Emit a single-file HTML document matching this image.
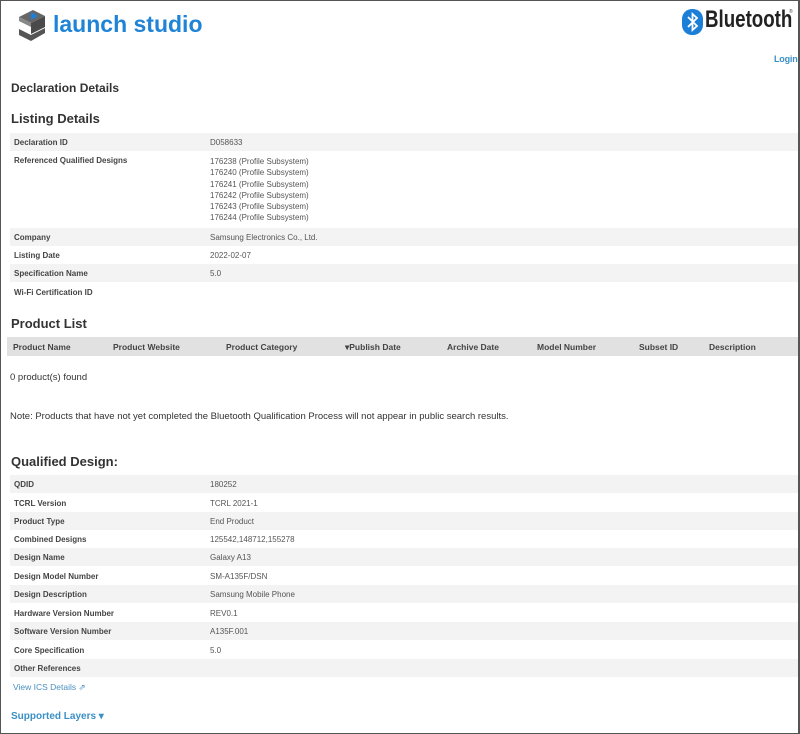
<!DOCTYPE html>
<html><head><meta charset="utf-8"><style>
body{margin:0;width:800px;height:734px;overflow:hidden;background:#fff;font-family:"Liberation Sans",sans-serif;color:#333}
.frame{position:absolute;left:0;top:0;width:797px;height:732px;border:1px solid #555;border-right:2px solid #555}
.a{position:absolute;white-space:nowrap}
.row{position:absolute;left:10px;width:788px;height:18px;font-size:8px;color:#333}
.row.s{background:#f3f3f3}
.row .l{position:absolute;left:4px;top:5px;font-weight:bold;color:#444}
.row .v{position:absolute;left:200px;top:5px;color:#555}
h{position:absolute;font-weight:bold;color:#333}
</style></head><body>
<div class="frame"></div>
<svg class="a" style="left:17px;top:9px" width="36" height="33" viewBox="0 0 36 33">
<polygon points="2,8 16,1 28,7 14,14" fill="#666"/>
<polygon points="14,14 28,7 28,18 14,25" fill="#4a4a4a"/>
<polygon points="2,8 14,14 14,18 2,12" fill="#888"/>
<polygon points="2,20 14,26 28,19 28,24 14,32 2,26" fill="#555"/>
<polygon points="14,3 21,7 14,11" fill="#1f7ed6"/>
</svg>
<div class="a" style="left:53px;top:11px;font-size:23px;color:#1f84d6;font-weight:bold">launch studio</div>
<svg class="a" style="left:682px;top:9px" width="21" height="26" viewBox="0 0 21 26"><rect x="0" y="0" width="21" height="26" rx="10" fill="#1b7fd8"/><path d="M6 8 L15 17 L10.5 21 V5 L15 9 L6 18" stroke="#fff" stroke-width="1.8" fill="none"/></svg>
<div class="a" style="left:705px;top:6px;font-size:24px;font-weight:bold;color:#222;transform:scaleX(0.78);transform-origin:left">Bluetooth</div>
<div class="a" style="left:789px;top:9px;font-size:5px;color:#444">®</div>
<div class="a" style="left:774px;top:54px;font-size:9px;color:#3a8fc4;font-weight:bold;letter-spacing:-0.2px">Login</div>
<h style="left:11px;top:81px;font-size:12px">Declaration Details</h>
<h style="left:11px;top:111px;font-size:13px">Listing Details</h>
<div class="row s" style="top:133px"><span class="l">Declaration ID</span><span class="v">D058633</span></div>
<div class="row" style="top:151px;height:78px"><span class="l">Referenced Qualified Designs</span><span class="v" style="line-height:11.3px">176238 (Profile Subsystem)<br>176240 (Profile Subsystem)<br>176241 (Profile Subsystem)<br>176242 (Profile Subsystem)<br>176243 (Profile Subsystem)<br>176244 (Profile Subsystem)</span></div>
<div class="row s" style="top:228px"><span class="l">Company</span><span class="v">Samsung Electronics Co., Ltd.</span></div>
<div class="row" style="top:246px"><span class="l">Listing Date</span><span class="v">2022-02-07</span></div>
<div class="row s" style="top:264px"><span class="l">Specification Name</span><span class="v">5.0</span></div>
<div class="row" style="top:283px"><span class="l">Wi-Fi Certification ID</span></div>
<h style="left:11px;top:316px;font-size:13px">Product List</h>
<div class="a" style="left:7px;top:337px;width:791px;height:19px;background:#e1e1e1;font-size:8.5px;font-weight:bold;color:#444">
<span class="a" style="left:6px;top:5px">Product Name</span><span class="a" style="left:106px;top:5px">Product Website</span><span class="a" style="left:219px;top:5px">Product Category</span><span class="a" style="left:338px;top:5px">▾Publish Date</span><span class="a" style="left:440px;top:5px">Archive Date</span><span class="a" style="left:530px;top:5px">Model Number</span><span class="a" style="left:632px;top:5px">Subset ID</span><span class="a" style="left:702px;top:5px">Description</span></div>
<div class="a" style="left:10px;top:372px;font-size:9.5px;color:#333">0 product(s) found</div>
<div class="a" style="left:10px;top:411px;font-size:9.5px;color:#333">Note: Products that have not yet completed the Bluetooth Qualification Process will not appear in public search results.</div>
<h style="left:11px;top:454px;font-size:13px">Qualified Design:</h>
<div class="row s" style="top:475px"><span class="l">QDID</span><span class="v">180252</span></div>
<div class="row" style="top:494px"><span class="l">TCRL Version</span><span class="v">TCRL 2021-1</span></div>
<div class="row s" style="top:512px"><span class="l">Product Type</span><span class="v">End Product</span></div>
<div class="row" style="top:530px"><span class="l">Combined Designs</span><span class="v">125542,148712,155278</span></div>
<div class="row s" style="top:548px"><span class="l">Design Name</span><span class="v">Galaxy A13</span></div>
<div class="row" style="top:567px"><span class="l">Design Model Number</span><span class="v">SM-A135F/DSN</span></div>
<div class="row s" style="top:585px"><span class="l">Design Description</span><span class="v">Samsung Mobile Phone</span></div>
<div class="row" style="top:604px"><span class="l">Hardware Version Number</span><span class="v">REV0.1</span></div>
<div class="row s" style="top:622px"><span class="l">Software Version Number</span><span class="v">A135F.001</span></div>
<div class="row" style="top:641px"><span class="l">Core Specification</span><span class="v">5.0</span></div>
<div class="row s" style="top:659px"><span class="l">Other References</span></div>
<div class="a" style="left:13px;top:682px;font-size:8.5px;color:#4a90c0">View ICS Details ⇗</div>
<div class="a" style="left:11px;top:711px;font-size:10px;color:#3a8fc4;font-weight:bold">Supported Layers ▾</div>
</body></html>
